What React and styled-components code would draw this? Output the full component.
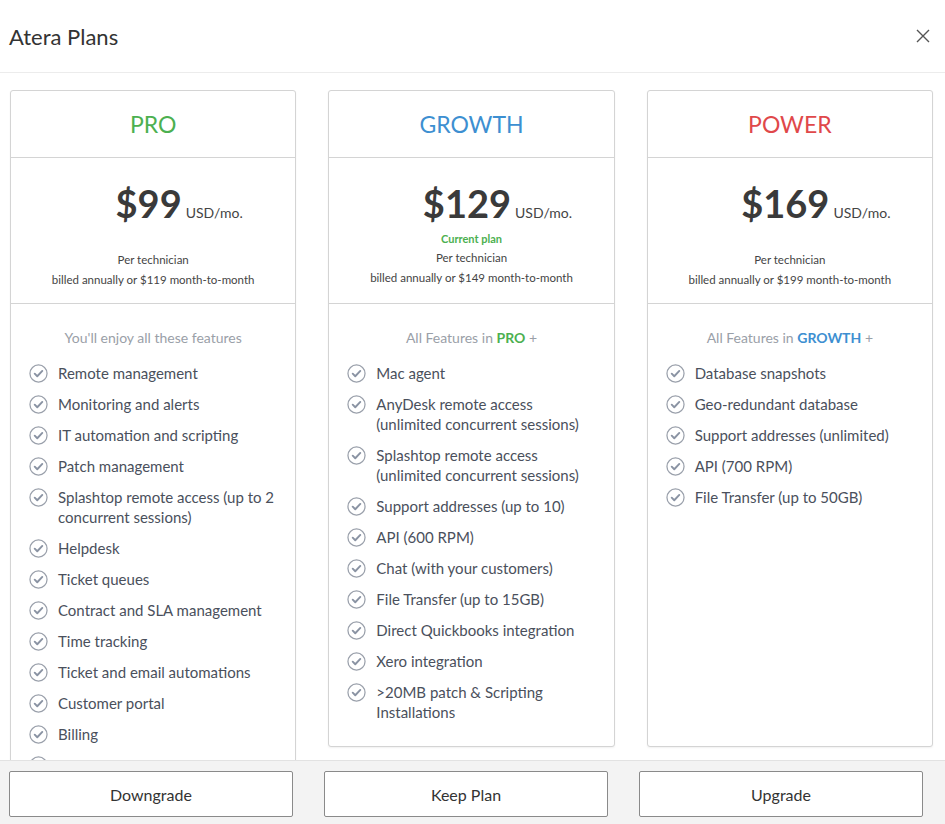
import React from "react";
import styled, { createGlobalStyle } from "styled-components";

const Global = createGlobalStyle`
  html, body { margin: 0; height: 100%; }
  body { font-family: Lato, "Open Sans", sans-serif; color: #3d4350; background: #fff; }
  #root { height: 100%; }
`;

const Modal = styled.div`
  height: 100vh;
  display: flex;
  flex-direction: column;
`;

const Header = styled.div`
  height: 72px;
  border-bottom: 1px solid #ececec;
  display: flex;
  align-items: center;
  justify-content: space-between;
  padding: 0 14px 0 9px;
  flex-shrink: 0;
  h1 { margin: 0; font-weight: 400; font-size: 22px; color: #333; }
`;

const Close = styled.button`
  border: 0;
  background: none;
  padding: 0;
  cursor: pointer;
  display: flex;
`;

const Body = styled.div`
  flex: 1;
  overflow: hidden;
  padding: 17px 12px 0 10px;
  display: grid;
  grid-template-columns: repeat(3, 1fr);
  gap: 32px;
  align-items: start;
`;

const Card = styled.div`
  border: 1px solid #d4d4d4;
  border-radius: 3px;
  background: #fff;
  box-shadow: 0 1px 2px rgba(0,0,0,0.06);
  padding-bottom: 8px;
  box-sizing: border-box;
  min-height: ${p => (p.$tall ? "657px" : "0")};
`;

const Title = styled.div`
  height: 66px;
  display: flex;
  align-items: center;
  justify-content: center;
  font-size: 23px;
  color: ${p => p.$color};
  border-bottom: 1px solid #d4d4d4;
`;

const PriceBox = styled.div`
  height: 146px;
  border-bottom: 1px solid #d4d4d4;
  display: flex;
  flex-direction: column;
  align-items: center;
  padding-top: 22px;
  box-sizing: border-box;
`;

const Price = styled.div`
  display: flex;
  align-items: baseline;
  gap: 4px;
  padding-left: 52px;
  strong { font-size: 38px; font-weight: 700; color: #3a3a3a; }
  span { font-size: 14px; color: #444; }
`;

const Current = styled.div`
  font-size: 11px;
  font-weight: 700;
  color: #4cb050;
  margin-top: 6px;
  height: 16px;
`;

const Note = styled.div`
  font-size: 11.5px;
  color: #444;
  text-align: center;
  line-height: 20px;
  margin-top: ${p => (p.$tight ? "0" : "24px")};
`;

const FeatHead = styled.div`
  text-align: center;
  font-size: 14px;
  color: #9aa0a8;
  margin: 25px 0 12px;
`;

const Accent = styled.b`
  color: ${p => p.$color};
`;

const List = styled.ul`
  list-style: none;
  margin: 0;
  padding: 0 18px;
`;

const Item = styled.li`
  display: flex;
  gap: 10px;
  font-size: 15px;
  line-height: 20px;
  color: #4a505c;
  padding: 5px 0 6px;
  svg { flex-shrink: 0; margin-top: 1px; }
`;

const Footer = styled.div`
  height: 64px;
  flex-shrink: 0;
  background: #f3f3f3;
  border-top: 1px solid #e2e2e2;
  display: grid;
  grid-template-columns: repeat(3, 1fr);
  gap: 31px;
  padding: 10px 22px 0 9px;
  box-sizing: border-box;
`;

const Btn = styled.button`
  height: 46px;
  background: #fff;
  border: 1px solid #8a8a8a;
  border-radius: 2px;
  font-family: inherit;
  font-size: 16px;
  color: #333;
`;

const Check = () => (
  <svg width="19" height="19" viewBox="0 0 20 20">
    <circle cx="10" cy="10" r="9" fill="none" stroke="#9aa0ab" strokeWidth="1.3" />
    <path d="M6 10.2l2.7 2.7 5.3-5.6" fill="none" stroke="#8a93a3" strokeWidth="2" strokeLinecap="round" strokeLinejoin="round" />
  </svg>
);

const plans = [
  {
    name: "PRO", color: "#4cb050", price: "$99", mm: "$119",
    head: <>You'll enjoy all these features</>,
    feats: ["Remote management", "Monitoring and alerts", "IT automation and scripting", "Patch management",
      "Splashtop remote access (up to 2 concurrent sessions)", "Helpdesk", "Ticket queues", "Contract and SLA management",
      "Time tracking", "Ticket and email automations", "Customer portal", "Billing", "Reporting", "Knowledge base"],
  },
  {
    name: "GROWTH", color: "#3d8fd1", price: "$129", mm: "$149", current: true, tall: true,
    head: <>All Features in <Accent $color="#4cb050">PRO</Accent> +</>,
    feats: ["Mac agent", "AnyDesk remote access (unlimited concurrent sessions)", "Splashtop remote access (unlimited concurrent sessions)",
      "Support addresses (up to 10)", "API (600 RPM)", "Chat (with your customers)", "File Transfer (up to 15GB)",
      "Direct Quickbooks integration", "Xero integration", ">20MB patch & Scripting Installations"],
  },
  {
    name: "POWER", color: "#e0484a", price: "$169", mm: "$199", tall: true,
    head: <>All Features in <Accent $color="#3d8fd1">GROWTH</Accent> +</>,
    feats: ["Database snapshots", "Geo-redundant database", "Support addresses (unlimited)", "API (700 RPM)", "File Transfer (up to 50GB)"],
  },
];

export default function App() {
  return (
    <Modal>
      <Global />
      <Header>
        <h1>Atera Plans</h1>
        <Close aria-label="close">
          <svg width="16" height="16" viewBox="0 0 16 16"><path d="M2 2l12 12M14 2L2 14" stroke="#555" strokeWidth="1.4" /></svg>
        </Close>
      </Header>
      <Body>
        {plans.map(p => (
          <Card key={p.name} $tall={p.tall}>
            <Title $color={p.color}>{p.name}</Title>
            <PriceBox>
              <Price><strong>{p.price}</strong><span>USD/mo.</span></Price>
              {p.current ? <Current>Current plan</Current> : null}
              <Note $tight={p.current}>Per technician<br />billed annually or {p.mm} month-to-month</Note>
            </PriceBox>
            <FeatHead>{p.head}</FeatHead>
            <List>
              {p.feats.map(f => <Item key={f}><Check />{f}</Item>)}
            </List>
          </Card>
        ))}
      </Body>
      <Footer>
        <Btn>Downgrade</Btn>
        <Btn>Keep Plan</Btn>
        <Btn>Upgrade</Btn>
      </Footer>
    </Modal>
  );
}
